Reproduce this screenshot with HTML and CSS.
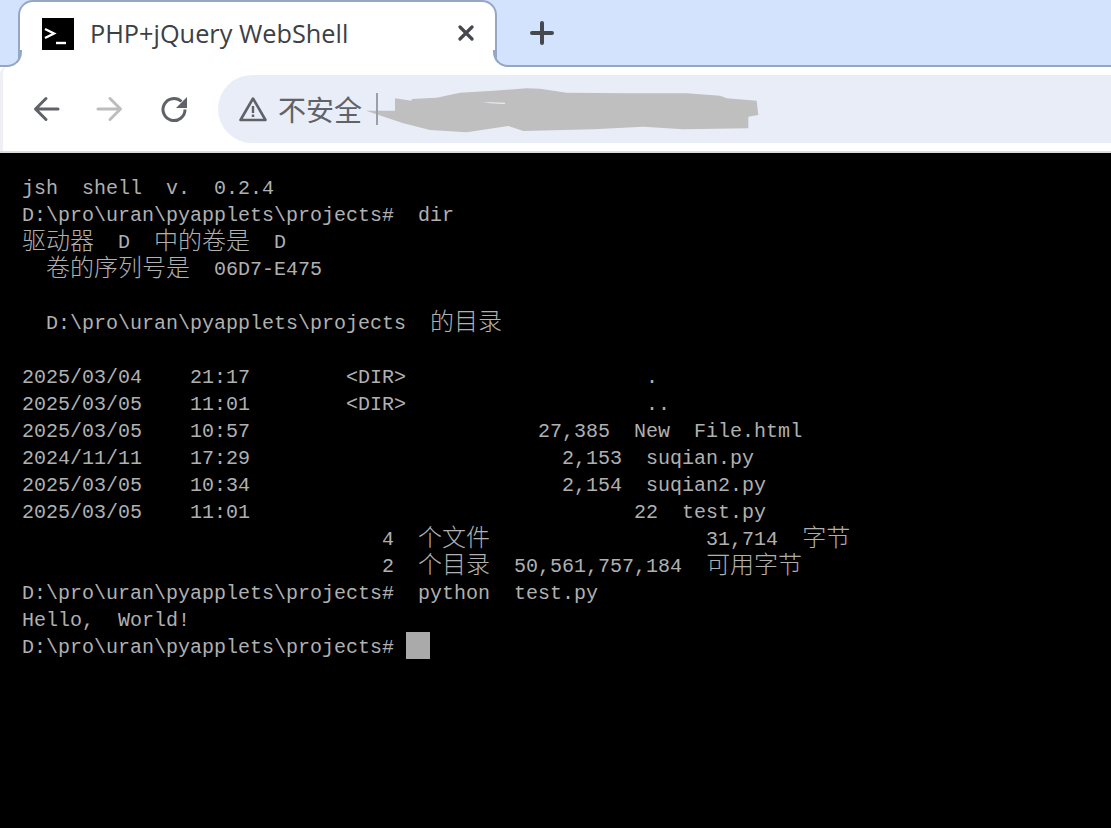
FILE: index.html
```html
<!DOCTYPE html>
<html lang="zh">
<head>
<meta charset="utf-8">
<title>PHP+jQuery WebShell</title>
<link rel="stylesheet" href="styles.css">
</head>
<body>
<div class="chrome">
  <div class="tabstrip">
    <div class="tab">
      <svg class="favicon" width="32" height="32" viewBox="0 0 32 32"><rect width="32" height="32" fill="#000"/><path d="M3 11l9 4.500-9 4.500" fill="none" stroke="#fff" stroke-width="2.400"/><path d="M14 25h10" stroke="#fff" stroke-width="2.400"/></svg>
      <span class="tab-title">PHP+jQuery WebShell</span>
      <svg class="tab-close" width="16" height="16" viewBox="0 0 16 16"><path d="M2 2l12 12M14 2L2 14" stroke="#45484d" stroke-width="3.200" stroke-linecap="round"/></svg>
    </div>
    <svg class="new-tab" width="24" height="24" viewBox="0 0 24 24"><path d="M12 2v20M2 12h20" stroke="#45484d" stroke-width="4" stroke-linecap="round"/></svg>
  </div>
  <div class="toolbar">
    <svg class="nav" width="30" height="30" viewBox="0 0 30 30"><path d="M27 15H5M15 4.500L4.500 15 15 25.500" fill="none" stroke="#5f6368" stroke-width="3" stroke-linecap="round" stroke-linejoin="round"/></svg>
    <svg class="nav" width="30" height="30" viewBox="0 0 30 30"><path d="M3 15h22M15 4.500L25.500 15 15 25.500" fill="none" stroke="#bdbdbd" stroke-width="3" stroke-linecap="round" stroke-linejoin="round"/></svg>
    <svg class="nav" width="30" height="30" viewBox="0 0 30 30"><path d="M26 15.500A11 11 0 1 1 22.500 7.500" fill="none" stroke="#5f6368" stroke-width="3"/><path d="M28 3v11H17z" fill="#5f6368"/></svg>
    <div class="omnibox">
      <svg class="warn" width="30" height="28" viewBox="0 0 30 28"><path d="M15 3.500L27.500 25H2.500z" fill="none" stroke="#5f6368" stroke-width="2.600" stroke-linejoin="round"/><path d="M15 11v7M15 19.500v2.500" stroke="#5f6368" stroke-width="2.400"/></svg>
      <span class="insecure">不安全</span>
      <span class="divider"></span>
      <svg class="redact" width="420" height="60" viewBox="0 0 1260 180"><path d="M18 92H105V55L155 62V57L230 53L300 38L400 32L500 25L540 26L620 38L800 40L980 40L1080 47L1100 55L1190 62L1195 105L1165 110V145L970 148L850 140L700 148L490 153L445 138L320 157L210 150L130 130z" fill="#bfbfbf"/><path d="M370 66L435 68V72L390 70z" fill="#e9edf7"/></svg>
    </div>
  </div>
</div>
<main class="terminal">
<div class="row">jsh  shell  v.  0.2.4</div>
<div class="row">D:\pro\uran\pyapplets\projects#  dir</div>
<div class="row"><span class="cjk">驱动器</span>  D  <span class="cjk">中的卷是</span>  D</div>
<div class="row">  <span class="cjk">卷的序列号是</span>  06D7-E475</div>
<div class="row"> </div>
<div class="row">  D:\pro\uran\pyapplets\projects  <span class="cjk">的目录</span></div>
<div class="row"> </div>
<div class="row">2025/03/04    21:17        &lt;DIR&gt;                    .</div>
<div class="row">2025/03/05    11:01        &lt;DIR&gt;                    ..</div>
<div class="row">2025/03/05    10:57                        27,385  New  File.html</div>
<div class="row">2024/11/11    17:29                          2,153  suqian.py</div>
<div class="row">2025/03/05    10:34                          2,154  suqian2.py</div>
<div class="row">2025/03/05    11:01                                22  test.py</div>
<div class="row">                              4  <span class="cjk">个文件</span>                  31,714  <span class="cjk">字节</span></div>
<div class="row">                              2  <span class="cjk">个目录</span>  50,561,757,184  <span class="cjk">可用字节</span></div>
<div class="row">D:\pro\uran\pyapplets\projects#  python  test.py</div>
<div class="row">Hello,  World!</div>
<div class="row">D:\pro\uran\pyapplets\projects# <span class="cursor"></span></div>
</main>
</body>
</html>
```
FILE: styles.css
```css
* { box-sizing: border-box; }
html, body { margin: 0; height: 100%; }
body { width: 1111px; height: 828px; overflow: hidden; background: #000; display: flex; flex-direction: column; }
.chrome { height: 153px; flex: none; background: #fff; border-bottom: 2px solid #dcdcdc; display: flex; flex-direction: column; }
.tabstrip { height: 67px; flex: none; background: #d3e3fd; border-bottom: 2px solid #94a7c4; display: flex; align-items: flex-start; }
.tab { position: relative; width: 479px; height: 67px; margin-left: 18px; background: #fff; border: 2px solid #94a7c4; border-bottom: none; border-radius: 15px 15px 0 0; display: flex; align-items: center; padding-left: 22px; flex: none; }
.tab::before, .tab::after { content: ""; position: absolute; bottom: 0; width: 15px; height: 15px; border-bottom: 2px solid #94a7c4; }
.tab::before { left: -15px; border-right: 2px solid #94a7c4; border-bottom-right-radius: 15px; box-shadow: 4px 4px 0 4px #fff; }
.tab::after { right: -15px; border-left: 2px solid #94a7c4; border-bottom-left-radius: 15px; box-shadow: -4px 4px 0 4px #fff; }
.favicon { flex: none; margin-top: -1px; }
.tab-title { font: 25.3px/32px "Open Sans", "Noto Sans", sans-serif; color: #3c4043; margin: -3px 0 0 16px; flex: 1; white-space: nowrap; }
.tab-close { flex: none; margin: -3px 21px 0 0; }
.new-tab { margin: 21px 0 0 33px; flex: none; }
.toolbar { flex: 1; display: flex; align-items: center; border-left: 3px solid #eef0f6; border-top-left-radius: 7px; padding-left: 28px; gap: 34px; }
.nav { flex: none; }
.omnibox { position: relative; margin-left: -5px; flex: 1; height: 68px; background: #e9edf7; border-radius: 34px 0 0 34px; display: flex; align-items: center; padding-left: 20px; }
.warn { flex: none; }
.insecure { font: 28px/36px "Noto Sans CJK SC", sans-serif; color: #5f6368; margin-left: 10px; }
.divider { position: relative; z-index: 1; width: 2px; height: 32px; background: #9a9ea6; margin-left: 14px; flex: none; }
.redact { position: absolute; left: 142px; top: 5px; }
.terminal { flex: 1; background: #000; padding: 20px 0 0 22px; font: 20px/31px "Liberation Mono", "DejaVu Sans Mono", monospace; color: #b0b0b0; }
.row { height: 27px; white-space: pre; }
.cjk { font: 300 24px/1px "Noto Sans CJK SC", sans-serif; vertical-align: -1px; }
.cursor { display: inline-block; width: 24px; height: 27px; background: #aaa; vertical-align: top; }
```
